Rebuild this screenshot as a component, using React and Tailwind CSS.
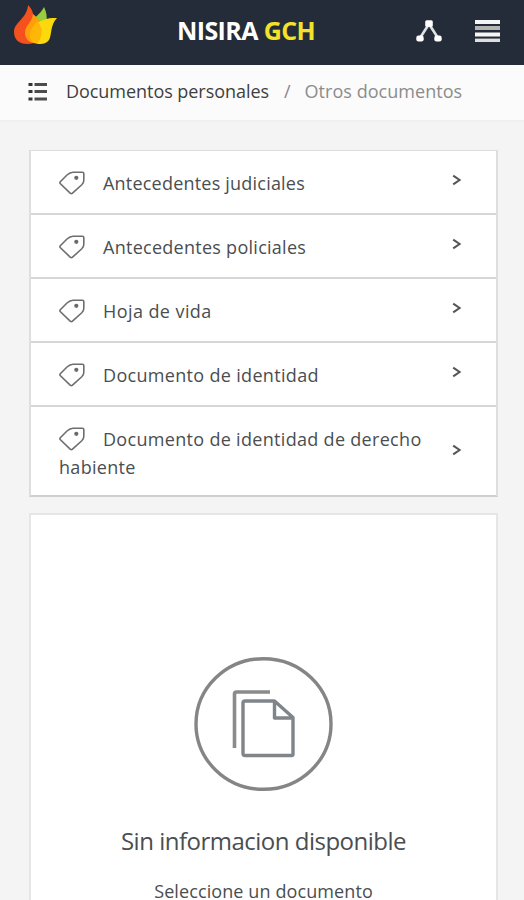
import React from "react";

const documents = [
  { id: 1, name: "Antecedentes judiciales", tracking: "tracking-[0.21px]" },
  { id: 2, name: "Antecedentes policiales", tracking: "tracking-[0.27px]" },
  { id: 3, name: "Hoja de vida", tracking: "tracking-[0.42px]" },
  { id: 4, name: "Documento de identidad", tracking: "tracking-[0.32px]" },
  { id: 5, name: "Documento de identidad de derecho habiente", tracking: "tracking-[0.31px]" },
];

const Logo = () => (
  <svg className="w-[46px] h-[42px]" viewBox="0 0 46 42">
    <path d="M16 0 C22 6 23 12 22 38 C11 41 2 37 2 27 C2 17 15 14 16 0Z" fill="#f4511e" />
    <path d="M32 2 C37 12 35 22 27 28 L18 24 C19 12 27 12 32 2Z" fill="#9ccc3c" />
    <path d="M21 9 C29 15 34 25 29 38 C21 40 13 36 13 28 C13 20 20 18 21 9Z" fill="#ff9d0a" />
    <path d="M45 13 C38 20 40 30 37 35 C33 41 22 40 19 34 C16 20 31 12 45 13Z" fill="#fbd90d" />
    <path d="M25 16 C31 22 31 30 26 38 C20 37 17 33 18 28 C19 23 22 21 25 16Z" fill="#ffb606" />
  </svg>
);

const NodesIcon = () => (
  <svg className="w-[26px] h-[22px]" viewBox="0 0 26 22">
    <path d="M4 18 L13 4 L22 18" fill="none" stroke="#dde0e4" strokeWidth="2.6" />
    <rect x="9.2" y="0.3" width="7.6" height="6.5" rx="1.5" fill="#fff" />
    <rect x="0.3" y="15.5" width="7.4" height="6" rx="2.2" fill="#fff" />
    <rect x="18.3" y="15.5" width="7.4" height="6" rx="2.2" fill="#fff" />
  </svg>
);

const MenuIcon = () => (
  <svg className="w-[25px] h-[22px]" viewBox="0 0 25 22">
    <path d="M0 2H25M0 14.5H25" stroke="#f5f5f3" strokeWidth="4" />
    <path d="M0 8H25" stroke="#b3b5b3" strokeWidth="4" />
    <path d="M0 20.3H25" stroke="#dededc" strokeWidth="3.4" />
  </svg>
);

const ListIcon = () => (
  <svg className="w-[20px] h-[20px]" viewBox="0 0 20 20">
    <path d="M0.5 2.5H4.5M0.5 9.5H4.5M0.5 17H4.5" stroke="#333" strokeWidth="3.2" />
    <path d="M6.5 2.5H19M6.5 9.5H19M6.5 17H19" stroke="#4c4c4c" strokeWidth="2.8" />
  </svg>
);

const TagIcon = () => (
  <svg className="inline-block w-[26px] h-[24px] mr-[18px] align-[-5px]" viewBox="0 0 26 24">
    <path
      d="M1.2 12.6 C0.8 12 0.8 11.4 1.3 10.8 L8 4 C10.5 1.7 12 1.2 14 1.2 H23.5 Q24.8 1.2 24.8 2.5 V9.5 C24.8 11.5 24 12.5 22.8 13.8 L13.5 22.2 Q12.5 23 11.4 22.3 L1.2 12.6Z"
      fill="none"
      stroke="#6b6f6f"
      strokeWidth="1.6"
    />
    <circle cx="17.3" cy="6.8" r="2.1" fill="#6a6a6a" />
  </svg>
);

const ArrowIcon = () => (
  <svg className="w-[10px] h-[12px] mb-[7px] shrink-0" viewBox="0 0 10 12">
    <path d="M1.2 1.6 L7.6 6 L1.2 10.4" fill="none" stroke="#555" strokeWidth="2" />
  </svg>
);

const FilesIcon = () => (
  <svg className="w-[140px] h-[136px]" viewBox="0 0 140 136">
    <ellipse cx="69.5" cy="68" rx="67.5" ry="65.3" fill="none" stroke="#858585" strokeWidth="3.4" />
    <path d="M40.5 92 V38 Q40.5 36 42.5 36 H76" fill="none" stroke="#8b8b8b" strokeWidth="3.6" />
    <path
      d="M51 45 H80.5 L99 61.5 V98 Q99 99.5 97.5 99.5 H51 Q49 99.5 49 97.5 V47 Q49 45 51 45Z M80.5 45 V62 H99"
      fill="none"
      stroke="#80858a"
      strokeWidth="3.4"
      strokeLinejoin="round"
    />
  </svg>
);

const App = () => {
  return (
    <div className="w-full h-[900px] overflow-hidden flex flex-col bg-[#f4f4f4] font-['Open_Sans','Noto_Sans',sans-serif] text-[#4a4e50]">
      {/* Top bar */}
      <header className="h-[65px] shrink-0 bg-[#242c3a] flex items-start pl-3 pr-6">
        <div className="pt-[5px] w-[165px]">
          <Logo />
        </div>
        <h1 className="pt-[15px] text-[25px] leading-[30px] font-bold text-white tracking-[-0.6px] whitespace-nowrap">
          NISIRA <span className="text-[#f3e12b]">GCH</span>
        </h1>
        <div className="ml-auto pt-5 flex gap-[33px]">
          <NodesIcon />
          <MenuIcon />
        </div>
      </header>

      {/* Breadcrumb */}
      <nav className="h-[57px] shrink-0 bg-[#fbfbfb] border-b-2 border-[#f0f0f0] flex items-center pl-7 pb-[2px] text-[18px] tracking-[-0.05px] whitespace-nowrap">
        <ListIcon />
        <span className="ml-[18px] text-[#3f3f3f]">Documentos personales</span>
        <span className="ml-[15px] text-[#888]">/</span>
        <span className="ml-[14px] text-[#8c8c8c] tracking-[0.04px]">Otros documentos</span>
      </nav>

      <main className="flex flex-col gap-4 pt-7 pl-[29px] pr-[26px]">
        <ul className="bg-white border-x-2 border-t border-b-2 border-[#dedede] border-b-[#cfcfcf]">
          {documents.map((doc) => (
            <li
              key={doc.id}
              className="flex items-center justify-between pl-7 pr-[34px] pt-[18px] pb-4 border-b-2 border-[#d6d6d6] last:border-b-0 last:pb-[14px]"
            >
              <p className={`w-[375px] text-[18px] leading-7 ${doc.tracking}`}>
                <TagIcon />
                {doc.name}
              </p>
              <ArrowIcon />
            </li>
          ))}
        </ul>

        {/* Empty state */}
        <section className="h-[420px] bg-white border-2 border-[#e6e6e6] flex flex-col items-center pt-[141px]">
          <FilesIcon />
          <h2 className="mt-8 text-[24px] leading-[34px] tracking-[-0.5px] whitespace-nowrap">Sin informacion disponible</h2>
          <p className="mt-[21px] text-[18px] leading-6 tracking-[0.1px] whitespace-nowrap">Seleccione un documento</p>
        </section>
      </main>
    </div>
  );
};

export default App;
